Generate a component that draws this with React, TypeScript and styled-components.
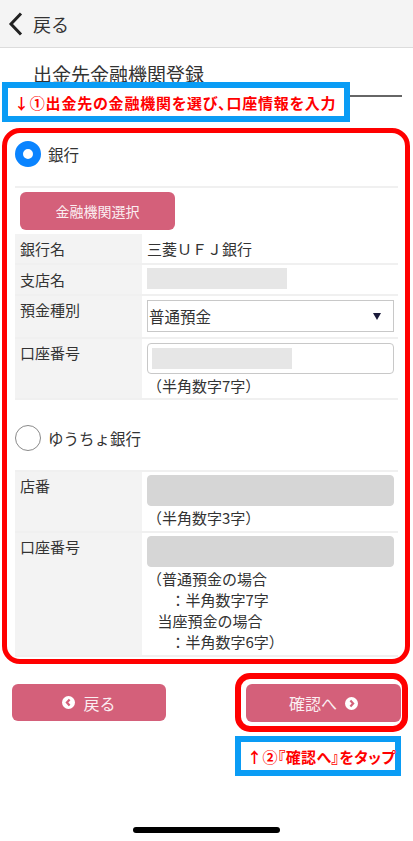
import { FC, ReactNode } from 'react'
import styled, { createGlobalStyle } from 'styled-components'

const GlobalStyle = createGlobalStyle`
  html, body {
    margin: 0;
    padding: 0;
    background: #fff;
  }
  body {
    font-family: 'Noto Sans CJK JP', 'Noto Sans', sans-serif;
    color: #333;
  }
`

const Page = styled.div`
  position: relative;
  width: 413px;
  height: 841px;
  display: flex;
  flex-direction: column;
  overflow: hidden;
`

const Header = styled.header`
  height: 47px;
  background: #f4f4f4;
  border-bottom: 1px solid #dcdcdc;
  display: flex;
  align-items: center;
  padding-left: 8px;
  gap: 9px;
  font-size: 18px;
  color: #333;
`

const TitleBlock = styled.div`
  margin: 0 11px 0 15px;
  padding: 14px 0 9px 18px;
  border-bottom: 2px solid #666;
  font-size: 19px;
  line-height: 24px;
  color: #333;
`

const Note = styled.div<{ $top: number; $left: number; $width: number; $spacing: number }>`
  position: absolute;
  top: ${(p) => p.$top}px;
  left: ${(p) => p.$left}px;
  width: ${(p) => p.$width}px;
  height: 40px;
  box-sizing: border-box;
  border: 6px solid #0a9cf5;
  background: #fff;
  color: #ff0000;
  font-weight: bold;
  font-size: 15px;
  font-feature-settings: 'palt';
  letter-spacing: ${(p) => p.$spacing}px;
  display: flex;
  align-items: center;
  padding-left: 6px;
  white-space: nowrap;
`

const Frame = styled.div`
  margin: 31px 3px 0 2px;
  border: 5px solid #ff0000;
  border-radius: 18px;
  padding: 0 7px 2px 8px;
`

const RadioRow = styled.div<{ $mt: number }>`
  height: 42px;
  margin-top: ${(p) => p.$mt}px;
  margin-bottom: 11px;
  display: flex;
  align-items: center;
  gap: 7px;
  font-size: 15.5px;
  color: #333;
`

const RadioMark = styled.span<{ $on?: boolean }>`
  width: 26px;
  height: 26px;
  box-sizing: border-box;
  border-radius: 50%;
  border: ${(p) => (p.$on ? '8px solid #0a84ff' : '1.5px solid #8a8a8a')};
  background: #fff;
`

const Section = styled.div`
  border-top: 2px solid #f0f0f0;
  border-bottom: 2px solid #f0f0f0;
`

const ButtonArea = styled.div`
  padding: 4px 0 4px 5px;
`

const PinkButton = styled.button<{ $w: number; $h: number; $size: number }>`
  width: ${(p) => p.$w}px;
  height: ${(p) => p.$h}px;
  border: none;
  border-radius: 6px;
  background: #d4607a;
  color: #fbeef1;
  font-family: inherit;
  font-size: ${(p) => p.$size}px;
  display: flex;
  align-items: center;
  justify-content: center;
  gap: 8px;
  padding: 0;
`

const Row = styled.div`
  display: grid;
  grid-template-columns: 127px 1fr;
  & + & {
    border-top: 2px solid #f0f0f0;
  }
`

const Label = styled.div<{ $center?: boolean }>`
  background: #f3f3f3;
  padding: ${(p) => (p.$center ? '4px 5px 3px' : '3px 5px')};
  font-size: 15px;
  line-height: 22px;
  color: #333;
`

const Value = styled.div<{ $pad: string }>`
  padding: ${(p) => p.$pad};
  padding-left: 5px;
  padding-right: 4px;
  font-size: 15px;
  line-height: 22px;
  color: #333;
`

const Redacted = styled.div`
  width: 140px;
  height: 21px;
  background: #e6e6e6;
`

const Select = styled.div`
  height: 32px;
  box-sizing: border-box;
  border: 1px solid #c8c8c8;
  display: flex;
  align-items: center;
  justify-content: space-between;
  padding: 0 12px 0 1px;
  font-size: 15.5px;
  background: #fff;
`

const Caret = styled.span`
  width: 0;
  height: 0;
  border-left: 4px solid transparent;
  border-right: 4px solid transparent;
  border-top: 7px solid #1a1a3a;
`

const Input = styled.div<{ $filled?: boolean }>`
  height: 31px;
  box-sizing: border-box;
  border-radius: 4px;
  border: 1px solid ${(p) => (p.$filled ? '#d6d6d6' : '#c8c8c8')};
  background: ${(p) => (p.$filled ? '#d6d6d6' : '#fff')};
  padding: 4px 0 0 4px;
`

const InputMask = styled.div`
  width: 140px;
  height: 21px;
  background: #e6e6e6;
`

const Hint = styled.div`
  padding-top: 1px;
  font-size: 15px;
  line-height: 21px;
  white-space: pre;
`

const Actions = styled.div`
  margin-top: 20px;
  padding: 0 12px;
  display: flex;
  justify-content: space-between;
`

const Ring = styled.div`
  position: relative;
`

const RingMark = styled.span`
  position: absolute;
  top: -11px;
  bottom: -10px;
  left: -11px;
  right: -7px;
  border: 6px solid #ff0000;
  border-radius: 15px;
  pointer-events: none;
`

const HomeBar = styled.div`
  margin: auto auto 8px;
  width: 147px;
  height: 6px;
  border-radius: 3px;
  background: #000;
`

const BackChevron = () => (
  <svg width="16" height="24" viewBox="0 0 16 24">
    <polyline points="13,1.5 3,12 13,22.5" fill="none" stroke="#222" strokeWidth="3" />
  </svg>
)

const CircleChevron: FC<{ dir: 'left' | 'right' }> = ({ dir }) => (
  <svg width="13" height="13" viewBox="0 0 13 13">
    <circle cx="6.5" cy="6.5" r="6.5" fill="#fff" />
    <polyline
      points={dir === 'left' ? '7.6,3.6 4.9,6.5 7.6,9.4' : '5.4,3.6 8.1,6.5 5.4,9.4'}
      fill="none"
      stroke="#d4607a"
      strokeWidth="2.2"
    />
  </svg>
)

const FormRow: FC<{ label: string; center?: boolean; pad: string; children: ReactNode }> = ({
  label,
  center,
  pad,
  children,
}) => (
  <Row>
    <Label $center={center}>{label}</Label>
    <Value $pad={pad}>{children}</Value>
  </Row>
)

const accountHint = [
  '（普通預金の場合',
  '\u3000\u2002\u200a：半角数字7字',
  '\u2002\u2009当座預金の場合',
  '\u3000\u2002\u200a：半角数字6字）',
].join('\n')

export default function App() {
  return (
    <Page>
      <GlobalStyle />
      <Header>
        <BackChevron />
        <span>戻る</span>
      </Header>
      <TitleBlock>出金先金融機関登録</TitleBlock>
      <Note $top={82} $left={2} $width={348} $spacing={0.8}>
        ↓①出金先の金融機関を選び、口座情報を入力
      </Note>

      <Frame>
        <RadioRow $mt={0}>
          <RadioMark $on />
          銀行
        </RadioRow>
        <Section>
          <ButtonArea>
            <PinkButton $w={155} $h={38} $size={14}>
              金融機関選択
            </PinkButton>
          </ButtonArea>
          <Row>
            <Label $center>銀行名</Label>
            <Value $pad="4px 0 3px">三菱ＵＦＪ銀行</Value>
          </Row>
          <FormRow label="支店名" center pad="3px 0 4px">
            <Redacted />
          </FormRow>
          <FormRow label="預金種別" pad="4px 0 5px">
            <Select>
              普通預金
              <Caret />
            </Select>
          </FormRow>
          <FormRow label="口座番号" pad="4px 0 2px">
            <Input>
              <InputMask />
            </Input>
            <Hint>（半角数字7字）</Hint>
          </FormRow>
        </Section>

        <RadioRow $mt={17}>
          <RadioMark />
          ゆうちょ銀行
        </RadioRow>
        <Section>
          <FormRow label="店番" pad="3px 0 3px">
            <Input $filled />
            <Hint>（半角数字3字）</Hint>
          </FormRow>
          <FormRow label="口座番号" pad="3px 0 3px">
            <Input $filled />
            <Hint>{accountHint}</Hint>
          </FormRow>
        </Section>
      </Frame>

      <Actions>
        <PinkButton $w={154} $h={37} $size={16}>
          <CircleChevron dir="left" />
          戻る
        </PinkButton>
        <Ring>
          <PinkButton $w={155} $h={38} $size={16}>
            確認へ
            <CircleChevron dir="right" />
          </PinkButton>
          <RingMark />
        </Ring>
      </Actions>
      <Note $top={736} $left={235} $width={166} $spacing={0.4}>
        ↑②『確認へ』をタップ
      </Note>

      <HomeBar />
    </Page>
  )
}
